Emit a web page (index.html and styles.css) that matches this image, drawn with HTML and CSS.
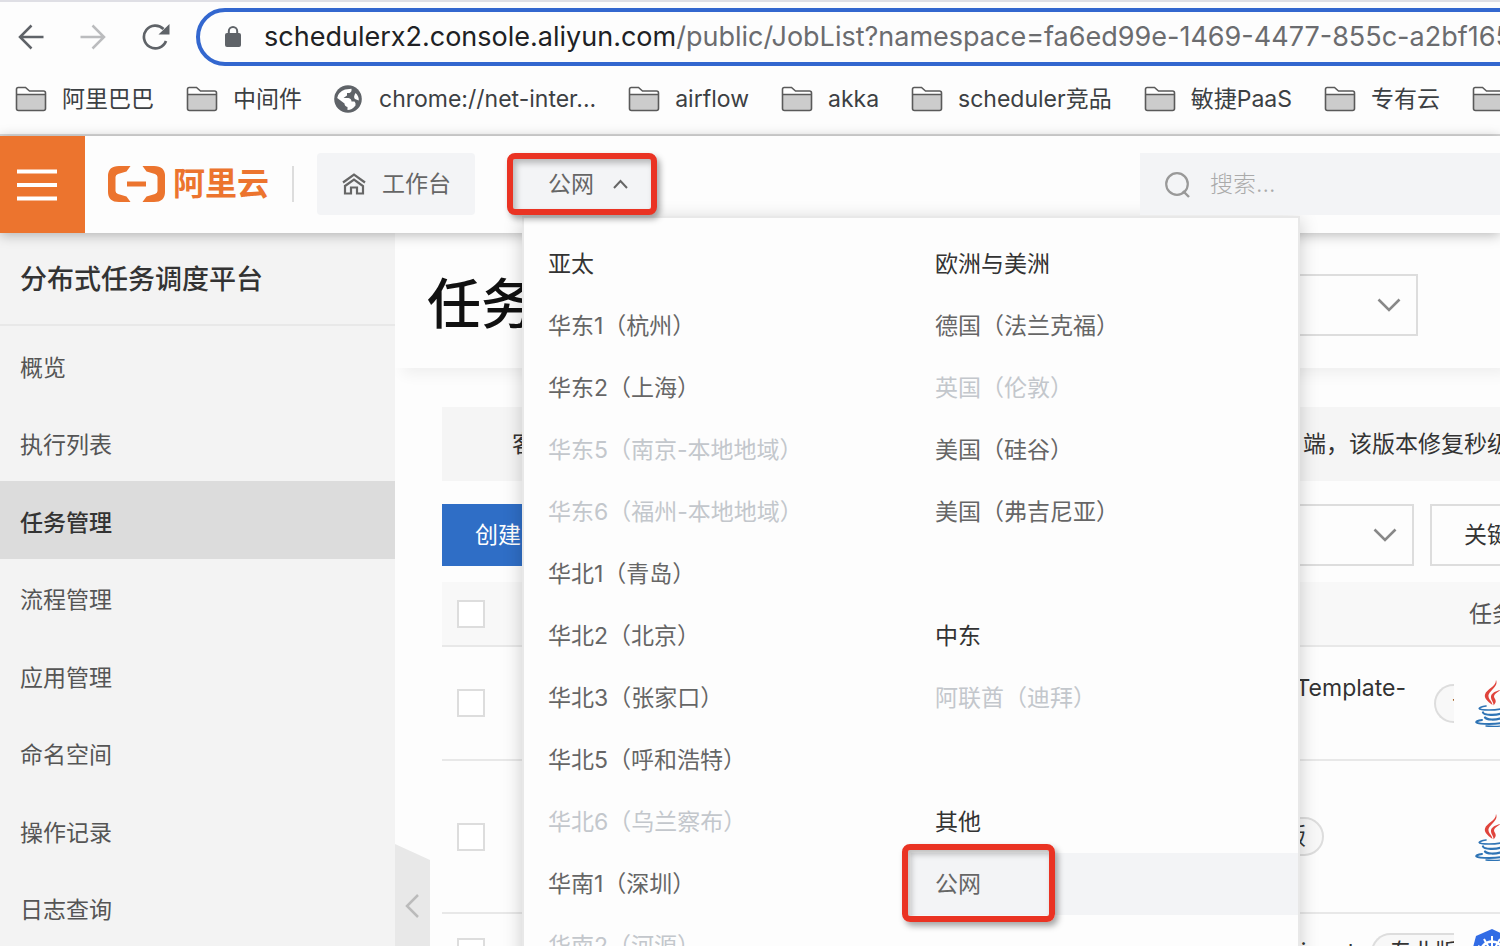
FILE: index.html
```html
<!DOCTYPE html>
<html lang="zh-CN">
<head>
<meta charset="utf-8">
<title>分布式任务调度平台</title>
<link rel="stylesheet" href="styles.css">
</head>
<body>
<svg class="defs" aria-hidden="true">
  <symbol id="folder" viewBox="0 0 32 26">
    <path d="M1.500 8V3.200Q1.500 1.500 3.200 1.500H10.500L14.500 5H28.500Q30.500 5 30.500 7V8Z" fill="#fff"/>
    <path d="M1.500 8.500H30.500V22.500Q30.500 24.500 28.500 24.500H3.500Q1.500 24.500 1.500 22.500Z" fill="#ccc"/>
    <path d="M1.500 22.500V3.200Q1.500 1.500 3.200 1.500H10.500L14.500 5H28.500Q30.500 5 30.500 7V22.500Q30.500 24.500 28.500 24.500H3.500Q1.500 24.500 1.500 22.500ZM1.500 8.500H30.500" fill="none" stroke="#5a5a5a" stroke-width="1.600"/>
  </symbol>
  <symbol id="down" viewBox="0 0 24 14"><path d="M1.500 1.500L12 12L22.500 1.500" fill="none" stroke="#888" stroke-width="2.600"/></symbol>
  <symbol id="java" viewBox="0 0 36 48">
    <path d="M21 1C24 8 13 12 13.500 17.500C14 21 17 22 17.500 26C12 22 9 19 10 15.500C11.500 10 21 8 21 1Z" fill="#e0443c"/>
    <path d="M27 10.500C20 14 18 16.500 19.500 19C21.500 22 21 24 18.500 26.500C19 23 15.500 21 16 17.500C16.500 14 21 12 27 10.500Z" fill="#e0443c"/>
    <g fill="none" stroke="#2f74b5" stroke-linecap="round">
      <path d="M11 27C2 28.500 1 31 14 31C21 31 26 30 29 29" stroke-width="1.700"/>
      <path d="M8 33.500C9 36.500 21 36.500 26 34.500" stroke-width="2.200"/>
      <path d="M10 38.500C12 41 20 41 25 39.500" stroke-width="2.200"/>
      <path d="M7 41C-2 42.500 -1 45 14 45C27 45 33 43 29 41" stroke-width="2"/>
      <path d="M28 28C36 26 34 34 26 36" stroke-width="1.700"/>
      <path d="M11 47C22 48 34 47 34 44" stroke-width="1.400"/>
    </g>
  </symbol>
</svg>

<header class="browser">
  <div class="toolbar">
    <button class="nav" aria-label="后退"><svg width="26" height="26" viewBox="0 0 26 26"><path d="M25.500 13H2M13.500 1.500L2 13L13.500 24.500" fill="none" stroke="#5f6368" stroke-width="2.500"/></svg></button>
    <button class="nav" aria-label="前进"><svg width="26" height="26" viewBox="0 0 26 26"><path d="M.5 13H24M12.500 1.500L24 13L12.500 24.500" fill="none" stroke="#bbbcbe" stroke-width="2.500"/></svg></button>
    <button class="nav reload" aria-label="刷新"><svg width="28" height="28" viewBox="0 0 28 28"><path d="M24 18A11.400 11.400 0 1 1 21.500 6" fill="none" stroke="#5f6368" stroke-width="2.700"/><path d="M27.500 1V11.500H16.500Z" fill="#5f6368"/></svg></button>
    <a class="address" href="#"><svg width="16" height="22" viewBox="0 0 16 22"><rect y="7" width="16" height="14" rx="2" fill="#5f6368"/><path d="M3.800 8V5.200a4.200 4.200 0 0 1 8.400 0V8" fill="none" stroke="#5f6368" stroke-width="2"/></svg><span class="url"><b>schedulerx2.console.aliyun.com</b>/public/JobList?namespace=fa6ed99e-1469-4477-855c-a2bf165e9c</span></a>
  </div>
  <nav class="bookmarks" aria-label="书签">
    <a href="#"><svg class="folder"><use href="#folder"/></svg>阿里巴巴</a>
    <a href="#"><svg class="folder"><use href="#folder"/></svg>中间件</a>
    <a href="#"><svg class="globe" viewBox="0 0 28 28"><circle cx="14" cy="14" r="13.800" fill="#5f6368"/><path d="M11 4.500L17.500 3.800Q18 7 15.500 8H13V10.500L9.500 13H14.500Q17.500 13.500 17.500 16.500H20.500Q22 18 21.500 20.500Q18 25 13.500 25V22Q10.500 21 10.500 18.500L3.200 13Q4 7 11 4.500Z" fill="#fff"/><path d="M21.500 8Q25 11 24.800 15.500L21 14Q19 12 21.500 8Z" fill="#fff"/></svg>chrome://net-inter...</a>
    <a href="#"><svg class="folder"><use href="#folder"/></svg>airflow</a>
    <a href="#"><svg class="folder"><use href="#folder"/></svg>akka</a>
    <a href="#"><svg class="folder"><use href="#folder"/></svg>scheduler竞品</a>
    <a href="#"><svg class="folder"><use href="#folder"/></svg>敏捷PaaS</a>
    <a href="#"><svg class="folder"><use href="#folder"/></svg>专有云</a>
    <a href="#" aria-label="更多"><svg class="folder"><use href="#folder"/></svg></a>
  </nav>
</header>

<div class="console">
  <header class="topbar">
    <button class="menu" aria-label="菜单"><svg width="40" height="34" viewBox="0 0 40 34"><path d="M0 3.500H40M0 17H40M0 30.500H40" stroke="#fff" stroke-width="4"/></svg></button>
    <a class="logo" href="#"><svg width="57" height="36" viewBox="0 0 57 36"><path d="M22.500 0H11Q0 0 0 10V26Q0 36 11 36H22.500L18.500 30.500L10 28Q7.500 27 7.500 25V11Q7.500 9 10 8L18.500 5.500ZM34.500 0H46Q57 0 57 10V26Q57 36 46 36H34.500L38.500 30.500L47 28Q49.500 27 49.500 25V11Q49.500 9 47 8L38.500 5.500ZM19 15.500H38V20.500H19Z" fill="#ec742e"/></svg><span>阿里云</span></a>
    <a class="workbench" href="#"><svg width="24" height="22" viewBox="0 0 24 22"><path d="M1 9.500L12 1.500L23 9.500M3 13L12 6.500L21 13V20.500H15V14.500H9V20.500H3V12" fill="none" stroke="#666" stroke-width="2.200"/></svg>工作台</a>
    <div class="region">
      <button class="region-btn marked" aria-expanded="true">公网<svg width="15" height="10" viewBox="0 0 15 10"><path d="M1 9L7.500 2L14 9" fill="none" stroke="#666" stroke-width="2"/></svg></button>
      <div class="dropdown">
        <ul class="col">
          <li class="head">亚太</li>
          <li>华东1（杭州）</li>
          <li>华东2（上海）</li>
          <li class="off">华东5（南京-本地地域）</li>
          <li class="off">华东6（福州-本地地域）</li>
          <li>华北1（青岛）</li>
          <li>华北2（北京）</li>
          <li>华北3（张家口）</li>
          <li>华北5（呼和浩特）</li>
          <li class="off">华北6（乌兰察布）</li>
          <li>华南1（深圳）</li>
          <li class="off">华南2（河源）</li>
        </ul>
        <div class="col">
          <ul>
            <li class="head">欧洲与美洲</li>
            <li>德国（法兰克福）</li>
            <li class="off">英国（伦敦）</li>
            <li>美国（硅谷）</li>
            <li>美国（弗吉尼亚）</li>
          </ul>
          <ul>
            <li class="head">中东</li>
            <li class="off">阿联酋（迪拜）</li>
          </ul>
          <ul>
            <li class="head">其他</li>
            <li class="current">公网<span class="marked callout"></span></li>
          </ul>
        </div>
      </div>
    </div>
    <label class="search"><svg width="26" height="28" viewBox="0 0 26 28"><circle cx="12" cy="14" r="10.800" fill="none" stroke="#999" stroke-width="2.200"/><path d="M18 21L24 27" stroke="#999" stroke-width="2.400"/></svg><input type="text" placeholder="搜索..." aria-label="搜索"></label>
  </header>

  <div class="body">
    <nav class="sidebar">
      <h2>分布式任务调度平台</h2>
      <div class="links">
        <a href="#">概览</a>
        <a href="#">执行列表</a>
        <a href="#" class="active">任务管理</a>
        <a href="#">流程管理</a>
        <a href="#">应用管理</a>
        <a href="#">命名空间</a>
        <a href="#">操作记录</a>
        <a href="#">日志查询</a>
      </div>
    </nav>
    <main class="main">
      <div class="title">
        <h1>任务管理</h1>
        <button class="select ns" aria-label="命名空间"><svg class="down"><use href="#down"/></svg></button>
      </div>
      <div class="content">
        <div class="notice"><span>客</span><span class="tail">端，该版本修复秒级别</span></div>
        <div class="filters">
          <button class="create">创建</button>
          <button class="select app" aria-label="应用"><svg class="down"><use href="#down"/></svg></button>
          <button class="keyword">关键</button>
        </div>
        <table>
          <thead><tr><th class="check"><input type="checkbox" aria-label="全选"></th><th></th><th class="type">任务</th></tr></thead>
          <tbody>
            <tr class="r1"><td class="check"><input type="checkbox" aria-label="选择"></td><td><div class="cell"><span class="job upper">Template-</span><span class="tag cut">专业版</span></div></td><td class="type"><svg class="java"><use href="#java"/></svg></td></tr>
            <tr class="r2"><td class="check"><input type="checkbox" aria-label="选择"></td><td><div class="cell short"><span class="tag">专业版</span></div></td><td class="type"><svg class="java"><use href="#java"/></svg></td></tr>
            <tr class="r3"><td class="check"><input type="checkbox" aria-label="选择"></td><td><div class="cell"><span class="job">input</span><span class="tag cut wide">专业版</span></div></td><td class="type kube-cell"><svg class="kube" viewBox="0 0 42 46"><path d="M21 0L36 7L42 26L31 43Q29 46 25 46H17Q13 46 11 43L0 26L5 7Z" fill="#326ce5"/><circle cx="21" cy="24" r="11.500" fill="none" stroke="#fff" stroke-width="2.600"/><path d="M21 7V41M7 17L35 31M35 17L7 31M13 38L29 10M29 38L13 10" stroke="#fff" stroke-width="2"/><circle cx="21" cy="24" r="3" fill="#326ce5"/></svg></td></tr>
          </tbody>
        </table>
      </div>
      <button class="collapse" aria-label="收起"><svg width="14" height="24" viewBox="0 0 14 24"><path d="M13 1L2 12L13 23" fill="none" stroke="#bbb" stroke-width="2.500"/></svg></button>
    </main>
  </div>
</div>
</body>
</html>
```
FILE: styles.css
```css
* { box-sizing: border-box; }
body {
  margin: 0;
  height: 100vh;
  overflow: hidden;
  display: flex;
  flex-direction: column;
  background: #fdfdfd;
  color: #333;
  font: 23px/32px Inter, "Noto Sans CJK SC", sans-serif;
}
a { color: inherit; text-decoration: none; }
button { font: inherit; color: inherit; border: 0; padding: 0; background: none; }
ul { list-style: none; margin: 0; padding: 0; }
svg { flex: none; display: block; }
.defs { position: absolute; width: 0; height: 0; }

.browser { flex: none; border-top: 2px solid #dfdfe5; border-bottom: 2px solid #d9d9d9; overflow: hidden; }
.toolbar { display: flex; align-items: center; padding: 6px 0 0 18px; height: 64px; }
.nav { flex: none; width: 26px; margin-right: 36px; }
.reload { width: 28px; margin-right: 26px; }
.address {
  flex: 1 0 auto;
  height: 58px;
  display: flex;
  align-items: center;
  gap: 23px;
  padding-left: 25px;
  border: 4px solid #3367cf;
  border-radius: 29px;
  color: #6b6c6f;
  font-size: 27px;
}
.address b { font-weight: 400; color: #202124; }
.url { white-space: nowrap; }
.bookmarks { display: flex; height: 68px; align-items: center; padding: 0 0 3px 15px; gap: 32px; color: #3c4043; white-space: nowrap; }
.bookmarks a { flex: none; display: flex; align-items: center; gap: 15px; }
.folder { width: 32px; height: 26px; }
.globe { width: 28px; height: 28px; margin-right: 2px; }

.console { flex: 1; min-height: 0; display: flex; flex-direction: column; }
.topbar {
  flex: none;
  position: relative;
  z-index: 2;
  display: flex;
  align-items: center;
  height: 97px;
  padding-bottom: 2px;
  background: #fdfdfd;
  box-shadow: 0 2px 12px rgba(0, 0, 0, .28);
  color: #666;
  white-space: nowrap;
}
.topbar > * { flex: none; }
.menu { align-self: stretch; width: 85px; margin-bottom: -2px; padding-left: 17px; background: #ec742e; }
.logo { display: flex; align-items: center; gap: 8px; margin-left: 23px; padding-right: 23px; border-right: 2px solid #ddd; color: #ec742e; font-size: 32px; line-height: 35px; font-weight: 700; }
.logo span { height: 35px; }
.workbench { display: flex; align-items: center; gap: 16px; height: 62px; margin-left: 23px; padding: 0 24px 0 25px; background: #f3f4f6; border-radius: 4px; }
.region { position: relative; margin-left: 32px; }
.region-btn { display: flex; align-items: center; gap: 19px; height: 62px; padding: 0 23px 0 35px; }
.marked { border: 6px solid #ea3323; border-radius: 8px; background: #f3f4f6; box-shadow: 3px 4px 6px rgba(0, 0, 0, .35), inset 3px 4px 6px rgba(0, 0, 0, .25); }
.dropdown {
  position: absolute;
  z-index: -1;
  top: 63px;
  left: 15px;
  width: 778px;
  display: grid;
  grid-template-columns: 1fr 1fr;
  padding: 15px 0;
  background: #fdfdfd;
  border: 2px solid #e8e8e8;
  border-bottom: 0;
  box-shadow: 0 4px 18px rgba(0, 0, 0, .2);
}
.dropdown li { height: 62px; line-height: 62px; padding-left: 24px; }
.dropdown .head { color: #333; }
.dropdown .off { color: #c3c7cc; }
.dropdown .current { position: relative; background: #f3f4f6; }
.callout { position: absolute; top: -9px; left: -9px; width: 153px; height: 78px; background: none; }
.col ul + ul { margin-top: 62px; }
.search { display: flex; align-items: center; gap: 19px; height: 62px; margin-left: 483px; padding-left: 25px; background: #f3f4f6; }
.topbar .search { flex: 1; min-width: 0; }
.search input { flex: 1; min-width: 0; border: 0; padding: 0; background: none; font: inherit; }
.search input::placeholder { color: #aaa; font-weight: 300; }

.body { flex: 1; min-height: 0; display: flex; }
.sidebar { flex: none; width: 395px; background: #f3f3f3; color: #555; }
.sidebar h2 { margin: 0; height: 93px; padding-left: 20px; border-bottom: 2px solid #e8e8e8; font-size: 27px; line-height: 94px; font-weight: 500; color: #333; }
.links { display: grid; grid-template-rows: repeat(8, 1fr); height: 620px; }
.links a { display: flex; align-items: center; padding: 6px 0 0 20px; }
.links .active { background: #dcdcdc; color: #333; font-weight: 500; }

.main { position: relative; flex: 1; min-width: 0; overflow: hidden; }
.collapse { position: absolute; left: 0; bottom: -22px; width: 35px; height: 124px; padding-left: 10px; background: #e8e8e8; clip-path: polygon(0 0, 100% 16px, 100% 108px, 0 100%); }
.title { display: flex; align-items: center; justify-content: space-between; height: 135px; padding: 8px 82px 0 32px; box-shadow: 8px 6px 14px rgba(0, 0, 0, .06); }
.title h1 { margin: 0; font-size: 54px; line-height: 64px; font-weight: 500; color: #111; }
.select { display: flex; align-items: center; justify-content: flex-end; height: 62px; border: 2px solid #ddd; }
.ns { width: 420px; padding-right: 15px; }
.down { width: 24px; height: 14px; }
.content { padding: 39px 0 0 47px; }
.notice { display: flex; justify-content: space-between; height: 74px; align-items: center; padding-left: 70px; background: #f5f5f5; white-space: nowrap; }
.tail { flex: 0 0 197px; overflow: hidden; }
.filters { display: flex; gap: 16px; margin: 23px 0 16px; }
.create { width: 160px; height: 62px; padding-left: 33px; background: #2f6ec6; color: #fff; text-align: left; }
.app { flex: 1; padding-right: 15px; }
.keyword { width: 70px; border: 2px solid #ddd; border-right: 0; padding-left: 32px; white-space: nowrap; overflow: hidden; text-align: left; }
table { width: 100%; table-layout: fixed; border-collapse: collapse; }
th { height: 64px; background: #f8f8f8; font-weight: 400; color: #555; }
th, td { padding: 0; border-bottom: 2px solid #e8e8e8; text-align: left; overflow: hidden; }
.check { width: 60px; padding-left: 15px; }
.check input { appearance: none; display: block; width: 28px; height: 28px; margin: 0; border: 2px solid #ddd; background: #fff; }
.type { width: 46px; white-space: nowrap; }
th.type { padding-left: 15px; }
td.type { padding-left: 21px; }
td.kube-cell { padding-left: 17px; }
.r1 td { height: 114px; }
.r2 td { height: 153px; }
.r3 td { height: 78px; }
.cell { display: flex; align-items: center; justify-content: flex-end; gap: 16px; }
.short { padding-right: 130px; }
.upper { margin: 0 12px 30px 0; }
.tag { flex: none; height: 39px; line-height: 35px; padding: 0 16px; border: 2px solid #ddd; border-radius: 20px; background: #f8f8f8; white-space: nowrap; }
.cut { width: 20px; padding-right: 0; border-right: 0; border-radius: 20px 0 0 20px; overflow: hidden; }
.wide { width: 83px; }
.java { width: 36px; height: 48px; }
.kube { width: 42px; height: 46px; }
```
